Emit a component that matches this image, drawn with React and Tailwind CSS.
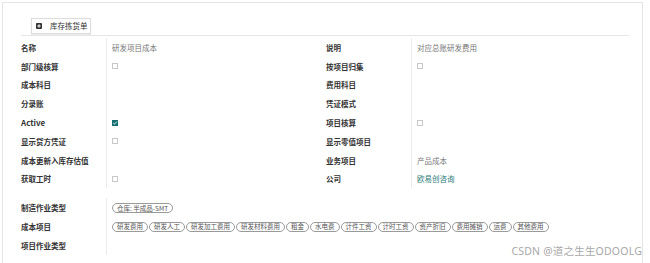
import React from 'react';

const FONT = { fontFamily: '"Noto Sans CJK SC", "Noto Sans", sans-serif' };

const Check = ({ on }) =>
    on ? (
        <span className="inline-flex w-[6px] h-[6px] bg-[#14706f] items-center justify-center">
            <svg viewBox="0 0 6 6" className="w-[6px] h-[6px]">
                <path d="M1.3 3.1 L2.5 4.2 L4.8 1.6" stroke="#fff" strokeWidth="0.9" fill="none" />
            </svg>
        </span>
    ) : (
        <span className="inline-block w-[6px] h-[6px] border border-[#c8c8c8] bg-white" />
    );

const Row = ({ label, children, latin }) => (
    <div className="flex h-[18.8px] items-center">
        <div className={`w-[85px] text-[7.5px] font-semibold text-[#333] ${latin ? 'text-[8px] font-bold' : ''}`}>{label}</div>
        <div className="flex-1 h-full border-l border-[#ececec] pl-[5px] flex items-center text-[7.5px] text-[#777]">
            {children}
        </div>
    </div>
);

const Tag = ({ children }) => (
    <span className="inline-flex items-center h-[10px] px-[4px] mr-[1px] rounded-full border border-[#9a9a9a] text-[6.5px] text-[#555] leading-none whitespace-nowrap">
        {children}
    </span>
);

const left = [
    ['名称', <span>研发项目成本</span>],
    ['部门级核算', <Check />],
    ['成本科目', null],
    ['分录账', null],
    ['Active', <Check on />],
    ['显示贷方凭证', <Check />],
    ['成本更新入库存估值', null],
    ['获取工时', <Check />],
];

const right = [
    ['说明', <span>对应总账研发费用</span>],
    ['按项目归集', <Check />],
    ['费用科目', null],
    ['凭证模式', null],
    ['项目核算', <Check />],
    ['显示零值项目', null],
    ['业务项目', <span>产品成本</span>],
    ['公司', <span className="text-[#2a7b78]">欧易创咨询</span>],
];

const costItems = ['研发费用', '研发人工', '研发加工费用', '研发材料费用', '租金', '水电费', '计件工资', '计时工资', '资产折旧', '费用摊销', '运费', '其他费用'];

export default function App() {
    return (
        <div className="w-[650px] h-[263px] bg-white overflow-hidden relative" style={FONT}>
            <div className="ml-[2px] mt-[2px] w-[641px] h-[270px] border-l border-t border-r border-[#e4e4e4]">
                <div className="pl-[18px] pr-[12px]">
                    <div className="pt-[15px] pl-[10px] h-[32px]">
                        <button className="h-[16px] w-[60px] pl-[4px] flex items-center gap-[8px] bg-white border border-[#dcdcdc] shadow-[0_1px_1px_rgba(0,0,0,0.08)] text-[7.5px] text-[#333]">
                            <span className="w-[6px] h-[6px] bg-[#333] rounded-[1px] flex items-center justify-center">
                                <svg viewBox="0 0 6 6" className="w-[6px] h-[6px]">
                                    <path d="M3 1.3 V4.7 M1.3 3 H4.7" stroke="#fff" strokeWidth="1" />
                                </svg>
                            </span>
                            库存拣货单
                        </button>
                    </div>
                    <div className="border-t border-[#e6e6e6] w-[608px]" />
                    <div className="grid grid-cols-2 w-[610px] pt-[2px]">
                        <div>
                            {left.map(([l, v]) => (
                                <Row key={l} label={l} latin={l === 'Active'}>{v}</Row>
                            ))}
                        </div>
                        <div>
                            {right.map(([l, v]) => (
                                <Row key={l} label={l}>{v}</Row>
                            ))}
                        </div>
                    </div>
                    <div className="pt-[10px]">
                        <Row label="制造作业类型">
                            <Tag>仓库: 半成品-SMT</Tag>
                        </Row>
                        <Row label="成本项目">
                            {costItems.map(t => <Tag key={t}>{t}</Tag>)}
                        </Row>
                        <Row label="项目作业类型">{null}</Row>
                    </div>
                </div>
            </div>
            <div className="absolute right-[8px] bottom-[3px] text-[10.5px] text-[#a8a8a8] tracking-[0.2px]" style={{ fontFamily: '"Noto Sans", "Noto Sans CJK SC", sans-serif' }}>
                CSDN @道之生生ODOOLG
            </div>
        </div>
    );
}
